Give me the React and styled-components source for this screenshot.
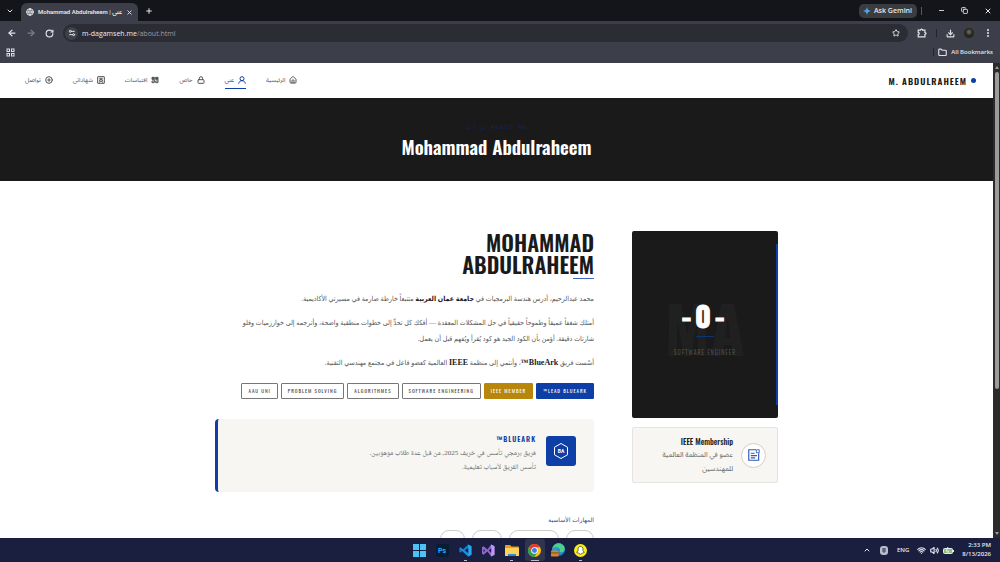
import React from "react";
import styled, {createGlobalStyle} from "styled-components";
import {
    ArrowLeft, ArrowRight, ChevronDown, ChevronUp, Copy, Download, EllipsisVertical, Folder, Globe,
    House, Lock, Minus, Plus, RotateCw, Settings2, Star, User, Volume2, Wifi, X, CirclePlus
} from "lucide-react";

const oswald = '"Oswald", "Roboto Condensed", "Noto Sans Arabic", sans-serif';
const serif = '"Liberation Serif", "DejaVu Sans Condensed", serif';
const naskh = '"Liberation Serif", "Noto Naskh Arabic", "DejaVu Sans Condensed", serif';
const arabic = '"Noto Sans Arabic", "DejaVu Sans", sans-serif';
const ui = '"Open Sans", "Noto Sans Arabic", "DejaVu Sans", sans-serif';

const GlobalStyle = createGlobalStyle`
  * { box-sizing: border-box; }
  body {
    margin: 0;
    background: #fff;
    font-family: ${ui};
  }
  h1, h2, h3, p { margin: 0; }
  button {
    border: 0;
    padding: 0;
    background: none;
    color: inherit;
    font: inherit;
    display: flex;
    align-items: center;
    justify-content: center;
  }
  a { color: inherit; text-decoration: none; }
  svg { flex: none; }
  .lucide { stroke-width: 3; }
`;

const Screen = styled.div`
  height: 100vh;
  display: flex;
  flex-direction: column;
  overflow: hidden;
`;

/* browser chrome */

const TabStrip = styled.div`
  flex: none;
  height: 21px;
  display: flex;
  align-items: flex-end;
  justify-content: space-between;
  background: #13151a;
  color: #e6e7ea;
`;

const Tabs = styled.div`
  height: 21px;
  display: flex;
  align-items: center;
  gap: 7px;
  padding-left: 6px;
`;

const WindowButtons = styled.div`
  height: 21px;
  display: flex;
  align-items: center;
  gap: 16px;
  padding-right: 8px;
`;

const Tab = styled.div`
  height: 18px;
  align-self: flex-end;
  display: flex;
  align-items: center;
  gap: 4px;
  padding: 0 5px;
  border-radius: 6px 6px 0 0;
  background: #3c3e49;
  font-family: Roboto, "Noto Sans Arabic", sans-serif;
  font-size: 6px;
  font-weight: 600;
  line-height: 12px;
  white-space: nowrap;
`;

const GeminiArea = styled.div`
  display: flex;
  align-items: center;
  gap: 4px;
`;

const Gemini = styled.button`
  && {
    height: 14px;
    gap: 3px;
    padding: 0 5px 0 4px;
    border-radius: 5px;
    background: #3b3c3f;
    font-size: 7px;
    font-weight: 600;
  }
`;

const Divider = styled.span`
  width: 1px;
  height: 8px;
  background: ${p => p.$color};
`;

const Toolbar = styled.div`
  flex: none;
  height: 24px;
  display: flex;
  align-items: center;
  gap: 9px;
  padding: 0 7px;
  background: #3c3e49;
  color: #e2e3e8;
`;

const AddressBar = styled.div`
  flex: 1;
  height: 18px;
  display: flex;
  align-items: center;
  gap: 4px;
  padding: 0 8px 0 2px;
  border-radius: 9px;
  background: #2b2c34;
  font-size: 7px;
`;

const SiteInfo = styled.button`
  && {
    width: 13px;
    height: 13px;
    border-radius: 50%;
    background: #3e404a;
  }
`;

const Address = styled.div`
  flex: 1;
  color: #9b9da6;
`;

const Host = styled.span`
  color: #eceef2;
`;

const Avatar = styled.span`
  width: 10px;
  height: 10px;
  border-radius: 50%;
  background: radial-gradient(circle at 50% 40%, #6a5f4c 0 15%, #2b2c24 40%, #17181a);
`;

const Bookmarks = styled.div`
  flex: none;
  height: 18px;
  display: flex;
  align-items: center;
  justify-content: space-between;
  padding: 0 7px 4px 6px;
  background: #3c3e49;
  color: #e2e3e8;
  font-size: 6px;
  font-weight: 600;
`;

const BookmarkLink = styled.div`
  display: flex;
  align-items: center;
  gap: 4px;
`;

/* page */

const Viewport = styled.div`
  flex: 1;
  min-height: 0;
  display: flex;
`;

const Page = styled.div`
  flex: 1;
  min-width: 0;
  overflow: hidden;
  color: #1a1a1a;
`;

const ScrollTrack = styled.div`
  width: 7px;
  display: flex;
  flex-direction: column;
  align-items: center;
  justify-content: space-between;
  padding: 3px 0;
  background: #2b2b2c;
`;

const ScrollThumb = styled.div`
  width: 4px;
  flex: 0 1 317px;
  margin: 3px 0 auto;
  border-radius: 2px;
  background: #9b9b9b;
`;

const Arrow = styled.span`
  border: 2px solid transparent;
  border-${p => (p.$up ? "bottom" : "top")}: 3px solid #9b9b9b;
  border-${p => (p.$up ? "top" : "bottom")}: 0;
`;

const Header = styled.header`
  height: 35px;
  display: flex;
  align-items: center;
  justify-content: space-between;
  padding: 0 17px 0 25px;
`;

const Logo = styled.a`
  display: flex;
  align-items: center;
  gap: 4px;
  font-family: ${oswald};
  font-size: 9px;
  font-weight: 600;
  letter-spacing: 1px;
`;

const Dot = styled.span`
  width: 5px;
  height: 5px;
  border-radius: 50%;
  background: #0d3fa6;
`;

const Nav = styled.nav`
  display: flex;
  gap: 20px;
`;

const NavLink = styled.a`
  height: 16px;
  display: flex;
  align-items: center;
  gap: 4px;
  border-bottom: 1px solid ${p => (p.$active ? "#0d3fa6" : "transparent")};
  color: ${p => (p.$active ? "#0d3fa6" : "#555")};
  font-family: ${arabic};
  font-size: 6px;
  line-height: 12px;
`;

const Hero = styled.section`
  height: 83px;
  display: flex;
  flex-direction: column;
  align-items: center;
  padding-top: 25px;
  background: #1a1a1a;
`;

const Eyebrow = styled.p`
  color: #16225c;
  font-family: "Liberation Mono", "DejaVu Sans Mono", monospace;
  font-size: 6px;
  line-height: 10px;
  letter-spacing: 1px;
`;

const HeroTitle = styled.h1`
  color: #fff;
  font-family: ${oswald};
  font-size: 19px;
  font-weight: 600;
  line-height: 26px;
`;

const Content = styled.section`
  display: grid;
  grid-template-columns: 146px minmax(0, 1fr);
  gap: 38px;
  align-items: start;
  max-width: 563px;
  margin: 0 auto;
  padding-top: 50px;
`;

const Side = styled.aside`
  display: grid;
  gap: 9px;
`;

const Portrait = styled.div`
  position: relative;
  height: 187px;
  display: flex;
  flex-direction: column;
  align-items: center;
  padding-top: 68px;
  border-radius: 2px;
  background: #1a1a1a;
  overflow: hidden;

  &::after {
    content: "";
    position: absolute;
    top: 13px;
    bottom: 13px;
    right: 0;
    width: 2px;
    background: #0d3fa6;
  }
`;

const Watermark = styled.span`
  position: absolute;
  top: 56px;
  left: 0;
  right: 0;
  color: #202020;
  font-family: ${oswald};
  font-size: 64px;
  font-weight: 700;
  line-height: 80px;
  text-align: center;
`;

const Initial = styled.span`
  position: relative;
  color: #fff;
  font-family: ${oswald};
  font-size: 29px;
  font-weight: 700;
  line-height: 32px;
  letter-spacing: 4px;
  -webkit-text-stroke: 1px #fff;
`;

const ShortLine = styled.span`
  position: relative;
  width: 18px;
  height: 1px;
  margin: 5px 0 10px;
  background: #0f3472;
`;

const Role = styled.span`
  position: relative;
  color: #5c5c5c;
  font-family: ${oswald};
  font-size: 6px;
  font-weight: 300;
  line-height: 12px;
  letter-spacing: 1px;
  white-space: nowrap;
`;

const Membership = styled.div`
  display: flex;
  align-items: center;
  gap: 8px;
  height: 56px;
  padding: 0 11px;
  border: 1px solid #e6e4de;
  border-radius: 2px;
  background: #f7f6f2;
`;

const RoundIcon = styled.span`
  flex: none;
  width: 25px;
  height: 25px;
  display: grid;
  place-items: center;
  border: 1px solid #d5d0c4;
  border-radius: 50%;
  background: #fff;
  color: #2f5bb8;
`;

const MemberTitle = styled.h3`
  font-family: ${oswald};
  font-size: 8px;
  font-weight: 500;
  line-height: 13px;
`;

const MemberText = styled.p`
  color: #666;
  font-family: ${arabic};
  font-size: 7px;
  line-height: 14px;
`;

const Name = styled.h2`
  position: relative;
  padding-bottom: 4px;
  font-family: ${oswald};
  font-size: 22px;
  font-weight: 600;
  line-height: 22px;
  text-transform: uppercase;

  &::after {
    content: "";
    position: absolute;
    right: 0;
    bottom: 0;
    width: 21px;
    height: 1px;
    background: #3f66c0;
  }
`;

const Bio = styled.div`
  display: grid;
  gap: 8px;
  padding-top: 12px;
  color: #555;
  font-family: ${serif};
  font-size: 7px;
  line-height: 16px;

  strong { color: #1a1a1a; }
`;

const Latin = styled.strong`
  font-size: 8px;
  line-height: 12px;
`;

const Tags = styled.div`
  display: flex;
  gap: 3px;
  padding-top: 12px;
`;

const tones = {
    blue: ["#0d3fa6", "#fff"],
    gold: ["#b8860b", "#fff"],
    plain: ["#fff", "#444"],
};

const Tag = styled.span`
  padding: 0 6px;
  border: 1px solid ${p => (p.$tone === "plain" ? "#777" : tones[p.$tone][0])};
  border-radius: 1px;
  background: ${p => tones[p.$tone][0]};
  color: ${p => tones[p.$tone][1]};
  font-family: ${oswald};
  font-size: 5px;
  font-weight: 400;
  line-height: 14px;
  letter-spacing: 1px;
  white-space: nowrap;
`;

const Team = styled.div`
  display: flex;
  gap: 10px;
  height: 73px;
  margin-top: 20px;
  padding: 13px 18px;
  border-left: 3px solid #0d3fa6;
  border-radius: 4px;
  background: #f7f6f2;
`;

const TeamLogo = styled.span`
  flex: none;
  width: 30px;
  height: 30px;
  margin-top: 4px;
  display: grid;
  place-items: center;
  border-radius: 3px;
  background: #0d3fa6;
`;

const TeamTitle = styled.h3`
  color: #0d3fa6;
  font-family: ${oswald};
  font-size: 7px;
  font-weight: 600;
  line-height: 14px;
  letter-spacing: 1px;
`;

const TeamText = styled.p`
  color: #666;
  font-family: ${naskh};
  font-size: 7px;
  line-height: 14px;
`;

const SkillsTitle = styled.h3`
  padding: 22px 0 4px;
  color: #2a4a94;
  font-family: "DejaVu Sans", sans-serif;
  font-size: 6px;
  font-weight: 400;
  line-height: 12px;
`;

const Skills = styled.div`
  display: flex;
  gap: 7px;
`;

const Skill = styled.span`
  width: ${p => p.$width}px;
  height: 18px;
  border: 1px solid #ccc;
  border-radius: 9px;
`;

/* desktop taskbar */

const Taskbar = styled.footer`
  flex: none;
  height: 24px;
  display: grid;
  grid-template-columns: 1fr auto 1fr;
  align-items: center;
  padding: 0 9px;
  background: #1a1f40;
  color: #e8eaf2;
`;

const Apps = styled.div`
  grid-column: 2;
  display: flex;
  gap: 3px;
`;

const AppButton = styled.button`
  && {
    position: relative;
    width: 20px;
    height: 22px;
    border-radius: 3px;
    background: ${p => (p.$active ? "#30344f" : "none")};
  }

  &::after {
    content: "";
    position: absolute;
    bottom: 0;
    width: ${p => (p.$active ? 8 : 3)}px;
    height: 1px;
    background: ${p => (p.$running ? "#b8bccb" : "transparent")};
  }
`;

const Tray = styled.div`
  display: flex;
  align-items: center;
  justify-content: flex-end;
  font-size: 6px;
  font-weight: 600;
`;

const TrayGroup = styled.div`
  display: flex;
  align-items: center;
  gap: ${p => p.$gap}px;
  padding-right: 8px;
`;

const Clock = styled.div`
  line-height: 9px;
  text-align: right;
`;

const GeminiIcon = () => (
    <svg width="8" height="8" viewBox="0 0 10 10">
        <path d="M5 0C5.4 3 7 4.600 10 5C7 5.400 5.400 7 5 10C4.600 7 3 5.400 0 5C3 4.600 4.600 3 5 0Z" fill="#4fa3e8"/>
    </svg>
);

const GridIcon = () => (
    <svg width="9" height="9" viewBox="0 0 9 9" fill="none" stroke="currentColor">
        <rect x="1" y="1" width="2.500" height="2.500"/>
        <rect x="5.500" y="1" width="2.500" height="2.500"/>
        <rect x="1" y="5.500" width="2.500" height="2.500"/>
        <rect x="5.500" y="5.500" width="2.500" height="2.500"/>
    </svg>
);

const ExtensionIcon = () => (
    <svg width="10" height="10" viewBox="0 0 24 24" fill="none" stroke="currentColor" strokeWidth="3">
        <path d="M3 5H8.500A2.500 2.500 0 0 1 13.500 5H19V10.500A2.500 2.500 0 0 1 19 15.500V21H3V15.500A2.500 2.500 0 0 0 3 10.500Z"/>
    </svg>
);

const QuotesIcon = () => (
    <svg width="8" height="8" viewBox="0 0 24 24" fill="none" stroke="currentColor" strokeWidth="3">
        <path d="M3 4H10V10H3ZM14 4H21V10H14Z" fill="currentColor"/>
        <path d="M10 10V20H3V15M21 10V20H14V15"/>
        <path d="M3 15H10M14 15H21"/>
    </svg>
);

const DiplomaIcon = () => (
    <svg width="8" height="8" viewBox="0 0 24 24" fill="none" stroke="currentColor" strokeWidth="3">
        <rect x="2" y="2" width="20" height="20" rx="1"/>
        <path d="M7 7H17M8 11H16V16H8ZM7 20V17M17 20V17"/>
    </svg>
);

const PersonIcon = () => (
    <svg width="8" height="8" viewBox="0 0 24 24" fill="none" stroke="currentColor" strokeWidth="3">
        <circle cx="12" cy="8" r="6"/>
        <path d="M2 23C3 17 7 14 12 14C17 14 21 17 22 23"/>
    </svg>
);

const CertificateIcon = () => (
    <svg width="14" height="14" viewBox="0 0 24 24" fill="none" stroke="currentColor" strokeWidth="2">
        <path d="M16 3H3V21H20V9"/>
        <path d="M6.500 9H13M6.500 13H17M6.500 17H14"/>
        <path d="M16 3V8H21M17 3H21V8" strokeWidth="1.500"/>
    </svg>
);

const HexIcon = () => (
    <svg width="18" height="18" viewBox="0 0 18 18">
        <path d="M9 1.500L15.500 5.200V12.800L9 16.500L2.500 12.800V5.200Z" fill="none" stroke="#fff"/>
        <text x="9" y="11" fill="#fff" fontSize="5" fontWeight="700" fontFamily="Roboto, sans-serif" textAnchor="middle">BA</text>
    </svg>
);

const WindowsIcon = () => (
    <svg width="13" height="13" viewBox="0 0 13 13">
        <path d="M0 0h6v6H0zM7 0h6v6H7zM0 7h6v6H0zM7 7h6v6H7z" fill="#4cc2f5"/>
    </svg>
);

const PhotoshopIcon = () => (
    <svg width="13" height="13" viewBox="0 0 13 13">
        <rect width="13" height="13" rx="2" fill="#061e34"/>
        <text x="6" y="9" fill="#31a8ff" fontSize="7" fontWeight="700" fontFamily="Roboto, sans-serif" textAnchor="middle">Ps</text>
    </svg>
);

const CodeIcon = () => (
    <svg width="13" height="13" viewBox="0 0 24 24">
        <path d="M17 1L23 4V20L17 23L6 13L2.500 16L0.500 14.500V9.500L2.500 8L6 11Z" fill="#0f7cc4"/>
        <path d="M17 1L23 4V20L17 23Z" fill="#2aa5ee"/>
        <path d="M17 7.500V16.500L11 12Z" fill="#1a1f40"/>
        <path d="M17 17.500L2.500 6L0.500 8L17 23Z" fill="#1c8fdc"/>
    </svg>
);

const StudioIcon = () => (
    <svg width="13" height="13" viewBox="0 0 24 24">
        <path d="M0 6L3 4L10 10L17 1L23 4V20L17 23L10 14L3 20L0 18Z" fill="#8f66cf"/>
        <path d="M17 1L23 4V20L17 23Z" fill="#c09af0"/>
        <path d="M3 9V15L6 12ZM17 8V16L12.500 12Z" fill="#1a1f40"/>
    </svg>
);

const FolderIcon = () => (
    <svg width="14" height="13" viewBox="0 0 14 13">
        <path d="M0 1.500Q0 1 1 1H5L6.500 2.500H13Q14 2.500 14 3.500V11H0Z" fill="#e5a01d"/>
        <path d="M0 4H14V11.500Q14 12 13 12H1Q0 12 0 11.500Z" fill="#fbd15b"/>
        <path d="M3 10H11V12H3Z" fill="#2c86d9"/>
    </svg>
);

const ChromeIcon = () => (
    <svg width="13" height="13" viewBox="0 0 24 24">
        <circle cx="12" cy="12" r="12" fill="#fbc116"/>
        <path d="M12 6H22.400A12 12 0 0 0 1.600 6L6.800 15Z" fill="#e33b2e"/>
        <path d="M1.600 6A12 12 0 0 0 12 24L17.200 15L12 18L6.800 15Z" fill="#2da14c"/>
        <circle cx="12" cy="12" r="6" fill="#fff"/>
        <circle cx="12" cy="12" r="4.600" fill="#3b7ded"/>
    </svg>
);

const EdgeIcon = () => (
    <svg width="14" height="14" viewBox="0 0 24 24">
        <circle cx="13" cy="11" r="11" fill="#1b84d2"/>
        <path d="M2 10C4 2 12 -2 19 2C25 6 25 14 19 16C15 17 14 14 15 12C15 7 7 5 2 10Z" fill="#4fcf8c"/>
        <path d="M2 10C7 5 14 7 15 11C10 9 7 14 9 19C4 18 1 14 2 10Z" fill="#1aa3d8"/>
        <rect x="0" y="13" width="13" height="10" rx="1" fill="#d9822b"/>
        <path d="M0 17H13" stroke="#7c4413" strokeWidth="1.500"/>
    </svg>
);

const SnapIcon = () => (
    <svg width="13" height="13" viewBox="0 0 24 24">
        <circle cx="12" cy="12" r="12" fill="#f7ee1c"/>
        <path d="M12 4.500C15 4.500 16.500 6.500 16.500 9V12L19 15.500L15.500 17L12 19L8.500 17L5 15.500L7.500 12V9C7.500 6.500 9 4.500 12 4.500Z" fill="#fff" stroke="#222" strokeWidth="1.200"/>
    </svg>
);

const ShieldIcon = () => (
    <svg width="8" height="9" viewBox="0 0 8 9">
        <rect width="8" height="9" rx="3" fill="#b9bdc9"/>
        <path d="M2 3H6M2 5H6M4 2V7" stroke="#3c415c"/>
    </svg>
);

const BatteryIcon = () => (
    <svg width="11" height="7" viewBox="0 0 11 7">
        <rect x="0.500" y="1.500" width="9" height="5" rx="1" fill="#8fbf7a" stroke="#e8eaf2"/>
        <path d="M10.500 3V5M5 0L3 4H5.500L5 6" fill="none" stroke="#e8eaf2"/>
    </svg>
);

const navItems = [
    {text: "الرئيسية", icon: House},
    {text: "عني", icon: PersonIcon, active: true},
    {text: "خاص", icon: Lock},
    {text: "اقتباسات", icon: QuotesIcon},
    {text: "شهاداتي", icon: DiplomaIcon},
    {text: "تواصل", icon: CirclePlus},
];

const tags = [
    {text: "LEAD BLUEARK™", tone: "blue"},
    {text: "IEEE MEMBER", tone: "gold"},
    {text: "SOFTWARE ENGINEERING", tone: "plain"},
    {text: "ALGORITHMES", tone: "plain"},
    {text: "PROBLEM SOLVING", tone: "plain"},
    {text: "AAU UNI", tone: "plain"},
];

const apps = [
    {name: "Start", icon: WindowsIcon},
    {name: "Photoshop", icon: PhotoshopIcon},
    {name: "Code", icon: CodeIcon, running: true},
    {name: "Visual Studio", icon: StudioIcon},
    {name: "Files", icon: FolderIcon, running: true},
    {name: "Chrome", icon: ChromeIcon, running: true, active: true},
    {name: "Edge", icon: EdgeIcon},
    {name: "Snapchat", icon: SnapIcon, running: true},
];

const Browser = () => (
    <>
        <TabStrip>
            <Tabs>
                <button aria-label="Search tabs"><ChevronDown size={8}/></button>
                <Tab>
                    <Globe size={8}/>
                    Mohammad Abdulraheem | عني
                    <button aria-label="Close tab"><X size={7}/></button>
                </Tab>
                <button aria-label="New tab"><Plus size={8}/></button>
            </Tabs>
            <WindowButtons>
                <GeminiArea>
                    <Gemini><GeminiIcon/>Ask Gemini</Gemini>
                    <Divider $color="#55565a"/>
                </GeminiArea>
                <button aria-label="Minimize"><Minus size={7}/></button>
                <button aria-label="Restore"><Copy size={7}/></button>
                <button aria-label="Close"><X size={8}/></button>
            </WindowButtons>
        </TabStrip>
        <Toolbar>
            <button aria-label="Back"><ArrowLeft size={10}/></button>
            <button aria-label="Forward"><ArrowRight size={10} color="#7d7f89"/></button>
            <button aria-label="Reload"><RotateCw size={9}/></button>
            <AddressBar>
                <SiteInfo aria-label="Site information"><Settings2 size={8}/></SiteInfo>
                <Address><Host>m-dagamseh.me</Host>/about.html</Address>
                <button aria-label="Bookmark"><Star size={8}/></button>
            </AddressBar>
            <button aria-label="Extensions"><ExtensionIcon/></button>
            <Divider $color="#23242b"/>
            <button aria-label="Downloads"><Download size={9}/></button>
            <Avatar/>
            <button aria-label="Menu"><EllipsisVertical size={10}/></button>
        </Toolbar>
        <Bookmarks>
            <button aria-label="Apps"><GridIcon/></button>
            <BookmarkLink>
                <Divider $color="#23242b"/>
                <Folder size={9}/>
                All Bookmarks
            </BookmarkLink>
        </Bookmarks>
    </>
);

const Main = () => (
    <div>
        <Name>Mohammad<br/>Abdulraheem</Name>
        <Bio>
            <p>محمد عبدالرحيم، أدرس هندسة البرمجيات في <strong>جامعة عمان العربية</strong> متتبعاً خارطة صارمة في مسيرتي الأكاديمية.</p>
            <p>أمتلك شغفاً عميقاً وطموحاً حقيقياً في حل المشكلات المعقدة — أفكك كل تحدٍّ إلى خطوات منطقية واضحة، وأترجمه إلى خوارزميات وفلو<br/>شارتات دقيقة. أؤمن بأن الكود الجيد هو كود يُقرأ ويُفهم قبل أن يعمل.</p>
            <p>أسّست فريق <Latin>BlueArk™</Latin>، وأنتمي إلى منظمة <Latin>IEEE</Latin> العالمية كعضو فاعل في مجتمع مهندسي التقنية.</p>
        </Bio>
        <Tags>
            {tags.map(tag => <Tag key={tag.text} $tone={tag.tone}>{tag.text}</Tag>)}
        </Tags>
        <Team>
            <TeamLogo><HexIcon/></TeamLogo>
            <div>
                <TeamTitle>BLUEARK™</TeamTitle>
                <TeamText>فريق برمجي تأسس في خريف 2025, من قبل عدة طلاب موهوبين.</TeamText>
                <TeamText>تأسس الفريق لأسباب تعليمية.</TeamText>
            </div>
        </Team>
        <SkillsTitle>المهارات الأساسية</SkillsTitle>
        <Skills>
            {[28, 50, 30, 25].map((width, i) => <Skill key={i} $width={width}/>)}
        </Skills>
    </div>
);

const App = () => (
    <Screen>
        <GlobalStyle/>
        <Browser/>
        <Viewport>
            <Page dir="rtl" lang="ar">
                <Header>
                    <Logo href="#"><Dot/>M. ABDULRAHEEM</Logo>
                    <Nav>
                        {navItems.map(({text, icon: Icon, active}) => (
                            <NavLink key={text} href="#" $active={active}><Icon size={8}/>{text}</NavLink>
                        ))}
                    </Nav>
                </Header>
                <Hero>
                    <Eyebrow dir="ltr">من أنا ABOUT ME</Eyebrow>
                    <HeroTitle>Mohammad Abdulraheem</HeroTitle>
                </Hero>
                <Content>
                    <Side>
                        <Portrait>
                            <Watermark>MA</Watermark>
                            <Initial>-0-</Initial>
                            <ShortLine/>
                            <Role>SOFTWARE ENGINEER</Role>
                        </Portrait>
                        <Membership>
                            <RoundIcon><CertificateIcon/></RoundIcon>
                            <div>
                                <MemberTitle>IEEE Membership</MemberTitle>
                                <MemberText>عضو في المنظمة العالمية للمهندسين</MemberText>
                            </div>
                        </Membership>
                    </Side>
                    <Main/>
                </Content>
            </Page>
            <ScrollTrack>
                <Arrow $up/>
                <ScrollThumb/>
                <Arrow/>
            </ScrollTrack>
        </Viewport>
        <Taskbar>
            <Apps>
                {apps.map(({name, icon: Icon, running, active}) => (
                    <AppButton key={name} aria-label={name} $running={running} $active={active}><Icon/></AppButton>
                ))}
            </Apps>
            <Tray>
                <TrayGroup $gap={9}>
                    <ChevronUp size={8}/>
                    <ShieldIcon/>
                    ENG
                </TrayGroup>
                <TrayGroup $gap={4}>
                    <Wifi size={9}/>
                    <Volume2 size={9}/>
                    <BatteryIcon/>
                </TrayGroup>
                <Clock>2:33 PM<br/>8/13/2026</Clock>
            </Tray>
        </Taskbar>
    </Screen>
);

export default App
